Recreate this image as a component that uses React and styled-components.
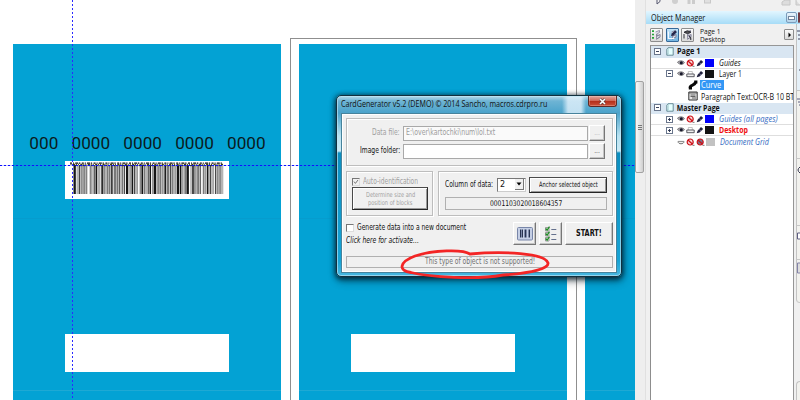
import React, { useLayoutEffect, useRef, useState } from "react";
import styled, { createGlobalStyle, css } from "styled-components";

const Global = createGlobalStyle`
  *, *::before, *::after { box-sizing: border-box; }
  body { margin: 0; background: #fff; }
`;

const tahoma = `"DejaVu Sans", sans-serif`;
const segoe = `"Open Sans", "Noto Sans", sans-serif`;

/* ---------- text that keeps to a given width ---------- */
const LabelBox = styled.span`
  display: block;
  flex: none;
  width: ${(p) => p.$w}px;
  height: 12px;
  line-height: 12px;
  white-space: nowrap;
  font-family: ${(p) => (p.$ui ? segoe : tahoma)};
  font-size: ${(p) => p.$size}px;
  font-weight: ${(p) => (p.$bold ? 700 : 400)};
  font-style: ${(p) => (p.$italic ? "italic" : "normal")};
  color: ${(p) => p.$color || "#111"};
`;
const LabelInk = styled.span`
  display: inline-block;
  transform-origin: 0 50%;
`;
function Label({ w, size = 8, ui, bold, italic, color, children }) {
  const ref = useRef(null);
  const [scale, setScale] = useState(1);
  useLayoutEffect(() => {
    setScale(w / ref.current.offsetWidth);
  }, [w, children]);
  return (
    <LabelBox $w={w} $size={size} $ui={ui} $bold={bold} $italic={italic} $color={color}>
      <LabelInk ref={ref} style={{ transform: `scaleX(${scale})` }}>{children}</LabelInk>
    </LabelBox>
  );
}

/* ---------- shell ---------- */
const Screen = styled.div`
  display: flex;
  width: 800px;
  height: 400px;
  overflow: hidden;
  background: #efefef;
`;
const Canvas = styled.main`
  position: relative;
  flex: none;
  width: 635px;
  overflow: hidden;
  background: #fff;
`;
const Track = styled.div`
  flex: none;
  width: 11px;
  padding-top: 81px;
  background: #eeeeee;
  border-right: 1px solid #e0e0e0;
`;
const Thumb = styled.div`
  display: flex;
  flex-direction: column;
  align-items: center;
  justify-content: center;
  gap: 1px;
  width: 9px;
  height: 92px;
  border: 1px solid #a2a2a2;
  border-radius: 2px;
  background: linear-gradient(90deg, #f8f8f8, #e9e9e9 45%, #cfcfcf);
`;
const Grip = styled.i`
  width: 4px;
  height: 1px;
  background: #777;
`;

/* ---------- cards ---------- */
const Cards = styled.div`
  display: flex;
  gap: 18px;
  height: 100%;
  padding: 44px 0 0 13px;
`;
const Card = styled.section`
  position: relative;
  flex: none;
  display: flex;
  flex-direction: column;
  align-items: center;
  width: 268px;
  background: linear-gradient(#1ea9d4 0 1px, transparent 1px) 0 346px / 100% 1px no-repeat,
    linear-gradient(#069cce 0 1px, transparent 1px) 0 174px / 100% 1px no-repeat, #03a2d4;
`;
const PageOutline = styled.div`
  position: absolute;
  inset: -6px -10px -4px -9px;
  border: 1px solid #8f8f8f;
`;
const CardNumber = styled.div`
  display: flex;
  gap: 13.2px;
  height: 20px;
  margin: 89px 0 0 1px;
  font: 17.2px/20px Roboto, sans-serif;
  color: #0b1a20;
`;
const Plate = styled.div`
  flex: none;
  width: 164px;
  height: 38px;
  margin: ${(p) => p.$top}px 0 0 0;
  background: #fff;
`;
const Guide = styled.div`
  position: absolute;
  ${(p) =>
    p.$vertical
      ? css`
          left: 72px; top: 0; bottom: 0; width: 1px;
          background: repeating-linear-gradient(#2a2aff 0 2px, transparent 2px 4px);
        `
      : css`
          top: 165px; left: 0; right: 0; height: 1px;
          background: repeating-linear-gradient(90deg, #1010ff 0 2px, rgba(40, 60, 255, 0.25) 2px 4px);
        `}
`;
const BarcodeSvg = styled.svg`
  display: block;
`;
const codes = "31121211221311121123112113211121311212211132112113121121231121113211221121311212113121121132112112";
function Barcode() {
  const bars = [];
  let x = 8.5;
  let i = 0;
  while (x < 156) {
    const w = Number(codes[i % codes.length]) * 0.78;
    const bar = i % 2 === 0;
    bars.push(
      <rect key={i} x={x} y="4" width={w} height="29" fill={bar ? (i % 6 === 2 ? "#777" : "#161616") : i % 5 === 1 ? "#fff" : "#b4b4b4"} />
    );
    x += w + (bar ? 0.12 : 0);
    i += 1;
  }
  return (
    <BarcodeSvg width="164" height="38" viewBox="0 0 164 38">
      {bars}
      <rect x="5" y="1.8" width="154" height="2.4" fill="#fff" />
      <path d="M5 2.2H158" stroke="#111" strokeWidth="1.2" strokeDasharray="2 1 1 1.2 3 .8 1.3 1.5" />
      <path d="M5.5 3.4H158" stroke="#3c3c14" strokeWidth="1.2" strokeDasharray="1 1.4 2.2 .8 1 1" />
      <path d="M9 4.6H157" stroke="#171717" strokeWidth="1" strokeDasharray="2 .8 1 1.3 2.4 1" />
    </BarcodeSvg>
  );
}

/* ---------- dialog ---------- */
const Dialog = styled.div`
  position: absolute;
  left: 336px;
  top: 95px;
  width: 286px;
  height: 182px;
  padding: 0 4px 4px;
  border: 1px solid #12303e;
  border-radius: 5px;
  background: linear-gradient(90deg, transparent 225px, rgba(235, 246, 255, 0.75) 231px 244px, transparent 249px) 0 0 / 100% 18px no-repeat,
    linear-gradient(#b5d9e9 0, #6eb4d4 5px, #4ba3cb 17px, #b9e2f1 40px, #cbeaf5 55px, #0d8fc0 57px, #17a3d5 165px, #49b7e0 100%);
  box-shadow: inset 0 0 0 1px rgba(190, 232, 248, 0.65), 0 1px 5px 1px rgba(0, 20, 32, 0.75), 1px 4px 9px rgba(0, 15, 25, 0.45);
`;
const TitleBar = styled.header`
  display: flex;
  justify-content: space-between;
  height: 17px;
  padding: 2px 0 0 0;
`;
const CloseButton = styled.button`
  display: grid;
  place-items: center;
  width: 29px;
  height: 11px;
  margin-top: -2px;
  padding: 0;
  border: 1px solid #5f2924;
  border-top: 0;
  border-radius: 0 0 3px 3px;
  background: linear-gradient(#e0a79d, #cf6b5b 45%, #b32d19 50%, #cb5139);
  box-shadow: inset 0 0 0 0.5px rgba(255, 220, 210, 0.6);
`;
const Client = styled.div`
  display: flex;
  flex-direction: column;
  height: 160px;
  padding: 4px 3px 3px 4px;
  border: 1px solid #47839c;
  background: #f0f0f0;
  box-shadow: inset 0 0 0 1px #fff;
`;
const Group = styled.div`
  border: 1px solid #bdbdbd;
  box-shadow: 1px 1px 0 #fff, inset 1px 1px 0 #fff;
`;
const FilesGroup = styled(Group)`
  display: flex;
  flex: none;
  flex-direction: column;
  gap: 2px;
  height: 48px;
  padding: 6px 7px 0 0;
`;
const FieldRow = styled.div`
  display: flex;
  justify-content: flex-end;
  align-items: center;
  gap: 2px;
  height: 16px;
`;
const Input = styled.div`
  display: flex;
  align-items: center;
  width: 185px;
  height: 15px;
  margin-left: 1px;
  padding-left: 2px;
  border: 1px solid #a9a9a9;
  background: ${(p) => (p.$off ? "#fafafa" : "#fff")};
`;
const Button = styled.button`
  display: flex;
  flex: none;
  flex-direction: column;
  align-items: center;
  justify-content: center;
  width: ${(p) => p.$w}px;
  height: ${(p) => p.$h}px;
  padding: 0;
  border: 1px solid;
  border-color: #fff #777 #777 #fff;
  background: #f0f0f0;
  box-shadow: inset -1px -1px 0 #c4c4c4;
  ${(p) => p.$framed && css`
    border-color: #4a4a4a #303030 #252525 #4a4a4a;
    box-shadow: inset 1px 1px 0 #fff, inset -1px -1px 0 #999;
  `}
`;
const DotsButton = styled(Button)`
  margin-left: -1px;
  font: 6px/10px ${tahoma};
  color: ${(p) => (p.$off ? "#aaa" : "#333")};
`;
const OptionsRow = styled.div`
  display: flex;
  flex: none;
  gap: 5px;
  height: 45px;
  margin-top: 5px;
`;
const IdentGroup = styled(Group)`
  flex: none;
  width: 87px;
  padding: 4px 0 0 5px;
`;
const CheckRow = styled.div`
  display: flex;
  align-items: center;
  gap: 3px;
  height: 11px;
`;
const CheckBox = styled.span`
  display: grid;
  place-items: center;
  width: 8px;
  height: 8px;
  border: 1px solid;
  border-color: #777 #ddd #ddd #777;
  background: ${(p) => (p.$off ? "#f2f2f2" : "#fff")};
`;
const TightLines = styled.span`
  display: flex;
  flex-direction: column;
  align-items: center;
  & > span { height: 8px; line-height: 8px; }
`;
const ColumnGroup = styled(Group)`
  flex: 1;
  min-width: 0;
  padding: 4px 4px 0 6px;
`;
const ColumnRow = styled.div`
  display: flex;
  align-items: center;
  height: 17px;
`;
const Select = styled.div`
  display: flex;
  align-items: center;
  justify-content: space-between;
  width: 29px;
  height: 14px;
  margin: 0 3px 0 4px;
  padding: 0 1px 0 2px;
  border: 1px solid;
  border-color: #777 #ccc #ccc #777;
  background: #fff;
`;
const SelectArrow = styled.span`
  display: grid;
  place-items: center;
  width: 9px;
  height: 11px;
  border-right: 1px solid #777;
  border-bottom: 1px solid #777;
  background: #f0f0f0;
`;
const Readout = styled.div`
  display: flex;
  flex: none;
  align-items: center;
  justify-content: center;
  border: 1px solid #b0b0b0;
  height: ${(p) => p.$h}px;
  margin: ${(p) => p.$m};
`;
const ActionRow = styled.div`
  display: flex;
  flex: none;
  align-items: flex-start;
  gap: 3px;
  height: 34px;
  margin-top: 6px;
`;
const ActionText = styled.div`
  flex: 1;
`;
const ActivateLink = styled.div`
  margin-top: 2px;
`;
const Marker = styled.svg`
  position: absolute;
  left: 395px;
  top: 244px;
`;

/* ---------- object manager ---------- */
const Side = styled.aside`
  display: flex;
  flex-direction: column;
  width: 154px;
  background: #f0f0f0;
`;
const MediaStrip = styled.div`
  flex: none;
  height: 11px;
`;
const DockHeader = styled.div`
  display: flex;
  flex: none;
  align-items: center;
  justify-content: space-between;
  height: 13px;
  padding: 0 0 0 5px;
  background: linear-gradient(#e2f6ff, #a7dcf7);
`;
const WindowButtons = styled.div`
  display: flex;
  gap: 1px;
`;
const WindowButton = styled.span`
  display: grid;
  place-items: center;
  width: ${(p) => p.$w}px;
  height: 11px;
  border: 1px solid ${(p) => p.$c};
  border-radius: 2px;
  background: ${(p) => p.$bg};
`;
const MinGlyph = styled.i`
  width: 7px;
  height: 4px;
  border: 1px solid #71869d;
  background: #fff;
`;
const SideBody = styled.div`
  display: flex;
  flex: 1;
`;
const Docker = styled.div`
  display: flex;
  flex-direction: column;
  width: 148px;
  padding-left: 4px;
`;
const DockTools = styled.div`
  display: flex;
  flex: none;
  align-items: center;
  gap: 2.5px;
  height: 21.3px;
`;
const ToolButton = styled.span`
  display: grid;
  place-items: center;
  width: 13px;
  height: 14px;
  border: 1px solid ${(p) => (p.$on ? "#34699a" : "#8d8d8d")};
  border-radius: 1px;
  background: ${(p) => (p.$on ? "linear-gradient(#c4e4f7, #72b4e0)" : "linear-gradient(#fafafa, #d9d9d9)")};
`;
const Where = styled.div`
  display: flex;
  flex: 1;
  flex-direction: column;
  gap: 1px;
  padding: 2px 0 0 3px;
  & > span { height: 7.5px; line-height: 7.5px; }
`;
const FlyButton = styled(ToolButton)`
  width: 10px;
  height: 11px;
`;
const Tree = styled.div`
  flex: 1;
  border: 1px solid #969696;
  border-bottom: 0;
  border-left: 1px solid #8d8d8d;
  background: #fff;
`;
const Row = styled.div`
  display: flex;
  align-items: center;
  height: 11.27px;
  padding-left: ${(p) => p.$indent}px;
  gap: ${(p) => p.$gap ?? 1}px;
  overflow: hidden;
  background: ${(p) => (p.$head ? "#d9e6f2" : "#fff")};
  border-bottom: 1px solid ${(p) => (p.$line ? "#dedede" : "transparent")};
`;
const Expander = styled.span`
  display: grid;
  place-items: center;
  flex: none;
  width: 7px;
  height: 7px;
  margin-right: ${(p) => p.$mr}px;
  border: 1px solid #6a768c;
  background: #fff;
`;
const Swatch = styled.span`
  flex: none;
  width: 9px;
  height: 8px;
  margin-right: 4px;
  background: ${(p) => p.$c};
`;
const Selected = styled.span`
  display: flex;
  align-items: center;
  height: 11px;
  padding: 0 3px 0 0.5px;
  background: #3397f5;
`;
const Icon = styled.svg`
  display: block;
  flex: none;
`;
const Toolbox = styled.div`
  flex: 1;
  display: flex;
  flex-direction: column;
  margin-left: 2px;
`;
const ToolCell = styled.div`
  display: flex;
  align-items: flex-start;
  height: ${(p) => p.$h}px;
  padding-top: ${(p) => p.$pt || 0}px;
  border-left: 1px solid #c3c3c3;
  border-bottom: 1px solid #c7c7c7;
  background: ${(p) => p.$bg || "#f2f2ee"};
`;
const LastToolCell = styled(ToolCell)`
  border-bottom-left-radius: 4px;
`;
const PaletteCell = styled(ToolCell)`
  margin-top: 78px;
  border-top: 1px solid #c3c3c3;
  border-top-left-radius: 4px;
`;

const Eye = ({ closed }) => (
  <Icon width="8" height="8" viewBox="0 0 8 8">
    {closed ? (
      <><path d="M1 3.5C1 6.5 7 6.5 7 3.5Z" fill="#eee" stroke="#666" strokeWidth="0.9" /><path d="M1 3.4h6" stroke="#999" /></>
    ) : (
      <><path d="M.4 3.3C2 1.3 6 1.3 7.6 3.6 5.8 6.2 2.4 6 .4 3.3Z" fill="#aaa8b0" stroke="#555" strokeWidth="0.6" /><circle cx="4.3" cy="3.8" r="1.5" fill="#17172a" /></>
    )}
  </Icon>
);
const NoPrint = ({ dark }) => (
  <Icon width="9" height="8" viewBox="0 0 9 8">
    <circle cx="4.2" cy="4" r="3" fill={dark ? "#77758b" : "#f7d4d4"} stroke="#cc1018" strokeWidth="1.2" />
    <path d="M2 2l4.6 4.3" stroke="#cc1018" strokeWidth="1.2" />
    <path d="M6.5 7.3h2" stroke="#777" />
  </Icon>
);
const Printer = () => (
  <Icon width="9" height="8" viewBox="0 0 9 8">
    <path d="M2.3 4V1.5h4V4" fill="#fff" stroke="#aaa" strokeWidth="0.7" />
    <path d="M.8 4h7.4v2.7H.8z" fill="#eee" stroke="#4c4c55" strokeWidth="0.9" />
  </Icon>
);
const Pencil = () => (
  <Icon width="8" height="8" viewBox="0 0 8 8">
    <path d="M.7 7.3L1.6 4.7 5 1l2.2 1.9-3.7 3.5Z" fill="#23233f" />
    <path d="M3.3 3.4l1.8 1.7" stroke="#8e8ec0" strokeWidth="0.6" />
  </Icon>
);
const PageIcon = () => (
  <Icon width="8" height="9" viewBox="0 0 8 9">
    <path d="M2.2.7h5v7.5H.8V2.2Z" fill="#e5ffff" stroke="#4b7380" strokeWidth="0.8" />
    <path d="M2.2.8V7H.9" fill="none" stroke="#8fb7bf" strokeWidth="0.6" />
  </Icon>
);
const Toggle = ({ plus, mr = 4 }) => (
  <Expander $mr={mr}>
    <Icon width="5" height="5" viewBox="0 0 5 5">
      <path d={plus ? "M1 2.5h3M2.5 1v3" : "M1 2.5h3"} stroke="#26304c" strokeWidth="0.9" />
    </Icon>
  </Expander>
);
const Layers = ({ kind }) => (
  <Icon width="11" height="12" viewBox="0 0 11 12">
    <path d="M4.5 3l4-1.6v2L6 5v2l3.2-1.5v2L5.5 10.4V4.8" fill="#dddde8" stroke="#77768e" strokeWidth="0.7" />
    <path d="M5.5 7.2l3.5-1.5M6 9.8l3.3-2" stroke="#77768e" strokeWidth="0.7" />
    {kind === 0 && <path d="M1 2.2h2M1 5.5h2M1 8.8h2" stroke="#23a338" strokeWidth="1.7" />}
    {kind === 1 && <><path d="M1.4 2.5v7h6" fill="none" stroke="#f5f8ff" strokeWidth="1.2" /><path d="M4 7l.7-2.4L8 1.5 10 3 6.5 6.4Z" fill="#27274a" /></>}
    {kind === 2 && <path d="M2 3.3Q5 .3 9 3.2 5.5 5.8 2 3.3M7 7l1.8 1.5V11M2 5v4.5" fill="#555" stroke="#303038" />}
  </Icon>
);

const LayerRow = ({ toggle, closed, print, noEdit, color, line = true, children }) => (
  <Row $indent={toggle ? 15 : 26} $line={line}>
    {toggle && <Toggle plus={toggle === "plus"} mr={3} />}
    <Eye closed={closed} />
    {print ? <Printer /> : <NoPrint />}
    {noEdit ? <NoPrint dark /> : <Pencil />}
    <Swatch $c={color} />
    {children}
  </Row>
);

const CardGenerator = () => (
  <Dialog>
    <TitleBar>
      <Label w={206} size={8.8} ui>CardGenerator v5.2 (DEMO) © 2014 Sancho, macros.cdrpro.ru</Label>
      <CloseButton>
        <Icon width="9" height="7" viewBox="0 0 9 7">
          <path d="M2 1l5 5M7 1L2 6" stroke="#573a38" strokeWidth="2.6" />
          <path d="M2 1l5 5M7 1L2 6" stroke="#fff" strokeWidth="1.6" />
        </Icon>
      </CloseButton>
    </TitleBar>
    <Client>
      <FilesGroup>
        <FieldRow>
          <Label w={28} color="#a0a0a0">Data file:</Label>
          <Input $off><Label w={89} color="#9c9c9c">E:\over\kartochki\num\lol.txt</Label></Input>
          <DotsButton $w={16} $h={16} $off>...</DotsButton>
        </FieldRow>
        <FieldRow>
          <Label w={40}>Image folder:</Label>
          <Input />
          <DotsButton $w={16} $h={16}>...</DotsButton>
        </FieldRow>
      </FilesGroup>
      <OptionsRow>
        <IdentGroup>
          <CheckRow>
            <CheckBox $off>
              <Icon width="6" height="6" viewBox="0 0 6 6"><path d="M1 2.6l1.4 1.8L5 1" fill="none" stroke="#777" /></Icon>
            </CheckBox>
            <Label w={55} color="#a0a0a0">Auto-identification</Label>
          </CheckRow>
          <Button $w={76} $h={23} $framed>
            <TightLines>
              <Label w={49} size={6.8} color="#a0a0a0">Determine size and</Label>
              <Label w={44} size={6.8} color="#a0a0a0">position of blocks</Label>
            </TightLines>
          </Button>
        </IdentGroup>
        <ColumnGroup>
          <ColumnRow>
            <Label w={48}>Column of data:</Label>
            <Select>
              <Label w={5}>2</Label>
              <SelectArrow>
                <Icon width="6" height="4" viewBox="0 0 6 4"><path d="M.5.5h5L3 3.5Z" fill="#000" /></Icon>
              </SelectArrow>
            </Select>
            <Button $w={78} $h={16} $framed><Label w={59} size={7.4}>Anchor selected object</Label></Button>
          </ColumnRow>
          <Readout $h={13} $m="4px 1px 0 0"><Label w={72} size={7.8}>0001103020018604357</Label></Readout>
        </ColumnGroup>
      </OptionsRow>
      <ActionRow>
        <ActionText>
          <CheckRow>
            <CheckBox />
            <Label w={109}>Generate data into a new document</Label>
          </CheckRow>
          <ActivateLink><Label w={73} italic>Click here for activate...</Label></ActivateLink>
        </ActionText>
        <Button $w={23} $h={23}>
          <Icon width="16" height="14" viewBox="0 0 16 14">
            <rect x=".5" y=".5" width="15" height="12.5" rx="1" fill="#c5cfe5" stroke="#7886a9" />
            <path d="M3.5 2.5v8M5.5 2.5v8M8.5 2.5v8M12.5 2.5v8" stroke="#293451" />
            <path d="M4.5 2.5v8M7.5 2.5v8M9.5 2.5v8M11.5 2.5v8" stroke="#6b789a" strokeWidth=".8" />
          </Icon>
        </Button>
        <Button $w={23} $h={23}>
          <Icon width="14" height="16" viewBox="0 0 14 16">
            {[0, 5, 10].map((y) => (
              <g key={y} transform={`translate(0 ${y})`}>
                <path d="M1.5 1.5h3.5v3.5h-3.5z" fill="#fff" stroke="#777" strokeWidth=".7" />
                <path d="M1.7 2.5l1.4 1.7L5.5.6" fill="none" stroke="#218b27" strokeWidth="1.3" />
                <path d="M7.3 3.5h5" stroke="#65718d" />
              </g>
            ))}
          </Icon>
        </Button>
        <Button $w={48} $h={23}><Label w={26} bold size={8}>START!</Label></Button>
      </ActionRow>
      <Readout $h={12} $m="0"><Label w={110} color="#707070">This type of object is not supported!</Label></Readout>
    </Client>
  </Dialog>
);

export default function App() {
  return (
    <Screen>
      <Global />
      <Canvas>
        <Cards>
          <Card>
            <CardNumber>
              {["000", "0000", "0000", "0000", "0000"].map((t, i) => <span key={i}>{t}</span>)}
            </CardNumber>
            <Plate $top={8}><Barcode /></Plate>
            <Plate $top={135} />
          </Card>
          <Card>
            <PageOutline />
            <Plate $top={290} />
          </Card>
          <Card />
        </Cards>
        <Guide />
        <Guide $vertical />
        <CardGenerator />
        <Marker width="162" height="40" viewBox="0 0 162 40">
          <path d="M75 10C68 5 38 6 20 12 4 18 3 27 16 28.500 35 33 80 36 108 31 139 29 154 24 153 19 150 9 108 7 75 10" fill="none" stroke="#f32525" strokeWidth="2.800" strokeLinecap="round" />
        </Marker>
      </Canvas>
      <Track><Thumb><Grip /><Grip /><Grip /></Thumb></Track>
      <Side>
        <MediaStrip>
          <Icon width="154" height="11" viewBox="0 0 154 11">
            <path d="M11 0v4l3-2.500V0" fill="none" stroke="#55566e" />
            <circle cx="29" cy="1" r="3" fill="#cfcfcf" />
            <path d="M43 0v4M47.500 0v4" stroke="#ccc" strokeWidth="3" />
            <rect x="58.500" y="-4" width="6" height="7" fill="#e0e0e0" stroke="#c8c8c8" />
            <path d="M136 5V2l3-2h5v5ZM150 0v5h4" fill="#ddd" stroke="#c6c6c6" />
          </Icon>
        </MediaStrip>
        <DockHeader>
          <Label w={54} size={8.8} ui>Object Manager</Label>
          <WindowButtons>
            <WindowButton $w={11} $c="#7b9cbb" $bg="linear-gradient(#e9f5fd,#b5d3e9)"><MinGlyph /></WindowButton>
            <WindowButton $w={2} $c="#733b42" $bg="#8c4a4a" />
          </WindowButtons>
        </DockHeader>
        <SideBody>
          <Docker>
            <DockTools>
              <ToolButton><Layers kind={0} /></ToolButton>
              <ToolButton $on><Layers kind={1} /></ToolButton>
              <ToolButton><Layers kind={2} /></ToolButton>
              <Where>
                <Label w={21} size={7.6} ui>Page 1</Label>
                <Label w={25} size={7.6} ui>Desktop</Label>
              </Where>
              <FlyButton><Icon width="5" height="6" viewBox="0 0 5 6"><path d="M1.500.5L4 3 1.500 5.500Z" fill="#000" /></Icon></FlyButton>
            </DockTools>
            <Tree>
              <Row $indent={3} $head><Toggle mr={4} /><PageIcon /><Label w={25} size={8.2} ui bold>&nbsp;Page 1</Label></Row>
              <LayerRow color="#0000fb"><Label w={22} size={8.2} ui italic>Guides</Label></LayerRow>
              <LayerRow toggle="minus" print color="#141414" line={false}><Label w={23} size={8.2} ui>Layer 1</Label></LayerRow>
              <Row $indent={37} $gap={2}>
                <Icon width="10" height="10" viewBox="0 0 10 10"><path d="M2.300 8C1.500 4.500 6.500 6.500 7.700 2" fill="none" stroke="#0a0a0a" strokeWidth="3" /><path d="M.8 6.600h3.200v3H.8zM6.200.5h3.200v3H6.200z" fill="#050505" /></Icon>
                <Selected><Label w={20} size={8.2} ui color="#fff">Curve</Label></Selected>
              </Row>
              <Row $indent={37} $gap={2.5}>
                <Icon width="10" height="10" viewBox="0 0 10 10"><path d="M.8 1h8.400v8H.8z" fill="#e5e5e5" stroke="#333" /><path d="M1 2h8M2.500 4h5M2.500 5.500h5M4 7h4" stroke="#444" strokeWidth=".8" /></Icon>
                <Label w={93} size={8.2} ui>Paragraph Text:OCR-B 10 BT</Label>
              </Row>
              <Row $indent={3} $head><Toggle mr={4} /><PageIcon /><Label w={45} size={8.2} ui bold>&nbsp;Master Page</Label></Row>
              <LayerRow toggle="plus" color="#0000fb"><Label w={59} size={8.2} ui italic color="#346bc2">Guides (all pages)</Label></LayerRow>
              <LayerRow toggle="plus" print color="#141414"><Label w={29} size={8.2} ui bold color="#ef1010">Desktop</Label></LayerRow>
              <LayerRow closed noEdit color="#c2c2c2" line={false}><Label w={49} size={8.2} ui italic color="#346bc2">Document Grid</Label></LayerRow>
            </Tree>
          </Docker>
          <Toolbox>
            <ToolCell $h={67} $pt={6} $bg="#e5f0f8"><Icon width="3" height="48" viewBox="0 0 3 48"><path d="M0 1h3M1 5h2M1 9h2M2 40h1" stroke="#43435f" /></Icon></ToolCell>
            <ToolCell $h={68} $pt={7}><Icon width="3" height="8" viewBox="0 0 3 8"><path d="M0 1h3M1 4h2M2 7h1" stroke="#5d5d80" /></Icon></ToolCell>
            <ToolCell $h={67} $pt={7}><Icon width="3" height="8" viewBox="0 0 3 8"><path d="M3 1Q-1 4 3 7" fill="none" stroke="#33334d" /></Icon></ToolCell>
            <ToolCell $h={34} $pt={6}><Icon width="3" height="8" viewBox="0 0 3 8"><path d="M3 1H.5v6H3" fill="#fff" stroke="#5d5d80" /></Icon></ToolCell>
            <LastToolCell $h={43} $pt={2}><Icon width="3" height="12" viewBox="0 0 3 12"><path d="M3 1H.5v10H3" fill="#ddd" stroke="#8383a8" /></Icon></LastToolCell>
            <PaletteCell $h={30} />
          </Toolbox>
        </SideBody>
      </Side>
    </Screen>
  );
}
